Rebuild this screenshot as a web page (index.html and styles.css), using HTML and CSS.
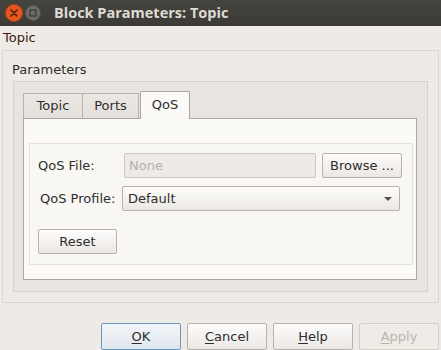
FILE: index.html
```html
<!DOCTYPE html>
<html>
<head>
<meta charset="utf-8">
<link rel="stylesheet" href="styles.css">
</head>
<body>
<div class="titlebar">
  <svg class="wbtns" width="48" height="26" viewBox="0 0 48 26">
    <circle cx="14" cy="13" r="8.5" fill="#e8561f" stroke="#b83d14" stroke-width="1"/>
    <path d="M11 10 L17 16 M17 10 L11 16" stroke="#4a2010" stroke-width="1.6" stroke-linecap="round"/>
    <circle cx="33" cy="13" r="7.5" fill="#6f6d68" stroke="#55534f" stroke-width="1"/>
    <rect x="30" y="10" width="6" height="6" fill="none" stroke="#3c3b37" stroke-width="1.3"/>
  </svg>
  <div class="title">Block Parameters: Topic</div>
</div>
<div class="win">
  <div class="caption">Topic</div>
  <div class="frame">
    <div class="legend">Parameters</div>
    <div class="group">
      <div class="tabs">
        <div class="tab first">Topic</div>
        <div class="tab">Ports</div>
        <div class="tab active">QoS</div>
      </div>
      <div class="pane">
        <div class="box">
          <div class="row">
            <div class="lbl lbl-file">QoS File:</div>
            <div class="field">None</div>
            <div class="btn browse">Browse ...</div>
          </div>
          <div class="row row2">
            <div class="lbl lbl-profile">QoS Profile:</div>
            <div class="combo"><span>Default</span><span class="arrow"></span></div>
          </div>
          <div class="row row3">
            <div class="btn reset">Reset</div>
          </div>
        </div>
      </div>
    </div>
  </div>
  <div class="buttons">
    <div class="btn dlg ok"><u>O</u>K</div>
    <div class="btn dlg"><u>C</u>ancel</div>
    <div class="btn dlg"><u>H</u>elp</div>
    <div class="btn dlg disabled"><u>A</u>pply</div>
  </div>
</div>
</body>
</html>
```
FILE: styles.css
```css
* { box-sizing: border-box; }
html, body { margin: 0; padding: 0; }
body {
  width: 441px;
  height: 350px;
  overflow: hidden;
  background: #eeebe7;
  font-family: "DejaVu Sans", sans-serif;
  font-size: 13px;
  color: #2e2e2e;
}
.titlebar {
  height: 26px;
  background: linear-gradient(#45443f, #3b3a36);
  display: flex;
  align-items: center;
}
.wbtns { display: block; flex: none; }
.title {
  margin-left: 6px;
  font-family: "Open Sans", sans-serif;
  font-weight: bold;
  font-size: 14.5px;
  color: #dfdbd2;
  line-height: 26px;
}
.caption {
  height: 24px;
  line-height: 24px;
  padding-left: 3px;
  color: #3a1a0e;
}
.frame {
  margin-left: 2px;
  width: 437px;
  height: 253px;
  border: 1px solid #d9d5d0;
  padding-bottom: 10px;
}
.legend {
  height: 30px;
  padding-top: 11px;
  padding-left: 9px;
  line-height: 16px;
}
.group {
  margin-left: 10px;
  width: 415px;
  height: 211px;
  border: 1px solid #d6d2cd;
  background: #e8e5e1;
  padding: 9px 10px 11px 9px;
}
.tabs {
  display: flex;
  align-items: flex-end;
  height: 28px;
  margin-bottom: -1px;
}
.tab {
  height: 25px;
  margin-bottom: 1px;
  border-top: 1px solid #b9b4ae;
  border-right: 1px solid #b9b4ae;
  background: linear-gradient(#ebe8e4, #e3e0db);
  text-align: center;
  line-height: 24px;
  width: 56px;
}
.tab.first { width: 60px; border-left: 1px solid #b9b4ae; }
.tab.active {
  position: relative;
  z-index: 1;
  width: 50px;
  height: 28px;
  margin-left: 1px;
  margin-bottom: 0;
  border: 1px solid #aaa59f;
  border-bottom: none;
  border-radius: 2px 2px 0 0;
  background: #fcfaf7;
  line-height: 25px;
}
.pane {
  width: 394px;
  height: 162px;
  border: 1px solid #aaa59f;
  background: #fcfaf7;
  padding: 24px 0 0 5px;
}
.box {
  width: 384px;
  height: 122px;
  border: 1px solid #e4e0db;
  background: #f9f7f4;
  padding: 9px 0 0 8px;
}
.row {
  display: flex;
  align-items: center;
  height: 25px;
}
.row2 { margin-top: 8px; }
.row3 { margin-top: 18px; }
.lbl-file { width: 86px; }
.lbl-profile { width: 82px; margin-left: 2px; }
.field {
  width: 192px;
  height: 25px;
  border: 1px solid #cbc7c1;
  border-radius: 2px;
  background: #eeebe7;
  color: #b5b0aa;
  line-height: 23px;
  padding-left: 4px;
}
.btn {
  height: 25px;
  border: 1px solid #b7b2ac;
  border-radius: 2px;
  background: linear-gradient(#fdfcfb, #ebe8e4);
  text-align: center;
  line-height: 23px;
  color: #2e2e2e;
}
.browse { width: 80px; margin-left: 6px; }
.combo {
  width: 278px;
  height: 25px;
  border: 1px solid #b7b2ac;
  border-radius: 2px;
  background: linear-gradient(#fdfcfb, #ebe8e4);
  display: flex;
  align-items: center;
  justify-content: space-between;
  padding: 0 7px 0 5px;
  line-height: 23px;
}
.arrow {
  width: 0;
  height: 0;
  border-left: 4px solid transparent;
  border-right: 4px solid transparent;
  border-top: 4px solid #555350;
}
.reset { width: 79px; }
.buttons {
  display: flex;
  justify-content: flex-end;
  gap: 6px;
  margin-top: 20px;
  padding-right: 2px;
}
.dlg {
  width: 80px;
  height: 27px;
  line-height: 25px;
}
.dlg u { text-underline-offset: 2px; }
.ok {
  border-color: #6b98c0;
  background: linear-gradient(#f2f5f8, #dfe7ee);
}
.disabled {
  color: #b8b3ad;
  border-color: #d2cec8;
  background: #efece8;
}
```
